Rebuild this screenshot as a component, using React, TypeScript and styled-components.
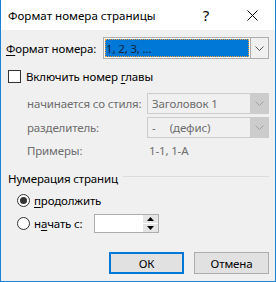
import React from 'react';
import styled, { createGlobalStyle } from 'styled-components';

const GlobalStyle = createGlobalStyle`
    html, body {
        margin: 0;
        padding: 0;
        background: #ffffff;
    }
    body {
        font-family: 'Noto Sans', 'Liberation Sans', sans-serif;
        font-size: 11.5px;
        letter-spacing: -0.15px;
        color: #000;
    }
`;

const Window = styled.div`
    width: 276px;
    height: 282px;
    box-sizing: border-box;
    border: 1px solid #1883d7;
    border-top: none;
    display: flex;
    flex-direction: column;
    background: #f0f0f0;
`;

const TitleBar = styled.div`
    height: 30px;
    background: #fff;
    display: flex;
    align-items: center;
    padding-left: 7px;
    font-size: 11.6px;
    letter-spacing: 0;
`;

const TitleText = styled.div`
    flex: 1;
`;

const TitleButton = styled.div`
    width: 46px;
    height: 30px;
    display: flex;
    align-items: center;
    justify-content: center;
    font-size: 15px;
`;

const Body = styled.div`
    flex: 1;
    display: flex;
    flex-direction: column;
    padding: 7px 6px 0 5px;
`;

const FormRow = styled.div<{ $indent?: number; $top?: number; $height?: number }>`
    display: flex;
    align-items: center;
    height: ${(p) => p.$height ?? 21}px;
    margin-top: ${(p) => p.$top ?? 0}px;
    padding-left: ${(p) => p.$indent ?? 0}px;
`;

const Label = styled.div<{ $width: number; $disabled?: boolean }>`
    width: ${(p) => p.$width}px;
    flex-shrink: 0;
    color: ${(p) => (p.$disabled ? '#6d6d6d' : '#000')};
    white-space: nowrap;
`;

const Key = styled.span`
    text-decoration: underline;
    text-underline-offset: 2px;
`;

const Select = styled.div<{ $disabled?: boolean; $width: number }>`
    width: ${(p) => p.$width}px;
    height: 100%;
    box-sizing: border-box;
    border: 1px solid ${(p) => (p.$disabled ? '#cccccc' : '#adadad')};
    background: ${(p) => (p.$disabled ? '#f0f0f0' : '#fff')};
    display: flex;
    align-items: stretch;
    color: ${(p) => (p.$disabled ? '#6d6d6d' : '#000')};
`;

const SelectValue = styled.div<{ $selected?: boolean }>`
    flex: 1;
    display: flex;
    align-items: center;
    white-space: pre;
    padding-left: ${(p) => (p.$selected ? 1 : 4)}px;
    margin: ${(p) => (p.$selected ? '1px' : '0')};
    background: ${(p) => (p.$selected ? '#0078d7' : 'transparent')};
    outline: ${(p) => (p.$selected ? '1px dotted #f09a3a' : 'none')};
    outline-offset: -1px;
    color: ${(p) => (p.$selected ? '#0c2440' : 'inherit')};
`;

const SelectArrow = styled.div<{ $disabled?: boolean }>`
    width: 17px;
    display: flex;
    align-items: center;
    justify-content: center;
    background: ${(p) => (p.$disabled ? '#cccccc' : '#f0f0f0')};
    border-left: 1px solid ${(p) => (p.$disabled ? '#cccccc' : '#adadad')};
`;

const CheckBox = styled.div`
    width: 13px;
    height: 13px;
    box-sizing: border-box;
    border: 1px solid #333;
    background: #fff;
    margin: 0 5px 0 2px;
`;

const Radio = styled.div<{ $checked?: boolean }>`
    width: 13px;
    height: 13px;
    box-sizing: border-box;
    border: 1px solid #333;
    border-radius: 50%;
    background: #fff;
    margin: 0 4px 0 11px;
    display: flex;
    align-items: center;
    justify-content: center;
    &::after {
        content: '';
        display: ${(p) => (p.$checked ? 'block' : 'none')};
        width: 7px;
        height: 7px;
        border-radius: 50%;
        background: #333;
    }
`;

const GroupHeader = styled.div`
    display: flex;
    align-items: center;
    height: 18px;
    margin-top: 10px;
    padding-left: 2px;
    gap: 5px;
    &::after {
        content: '';
        flex: 1;
        height: 1px;
        background: #dcdcdc;
        margin-top: -3px;
    }
`;

const SpinBox = styled.div`
    width: 65px;
    height: 19px;
    box-sizing: border-box;
    border: 1px solid #adadad;
    background: #fff;
    display: flex;
    justify-content: flex-end;
`;

const SpinButtons = styled.div`
    width: 15px;
    display: flex;
    flex-direction: column;
    gap: 1px;
    background: #fff;
`;

const SpinButton = styled.div`
    flex: 1;
    background: #e5e5e5;
    display: flex;
    align-items: center;
    justify-content: center;
`;

const ButtonRow = styled.div`
    margin-top: auto;
    margin-bottom: 7px;
    display: flex;
    justify-content: flex-end;
    gap: 10px;
`;

const Button = styled.div<{ $primary?: boolean }>`
    width: 75px;
    height: 22px;
    box-sizing: border-box;
    border: ${(p) => (p.$primary ? '2px solid #0078d7' : '1px solid #adadad')};
    background: #e1e1e1;
    display: flex;
    align-items: center;
    justify-content: center;
`;

const Chevron = ({ color }: { color: string }) => (
    <svg width="9" height="5" viewBox="0 0 9 5">
        <path d="M0.5 0.5 L4.5 4.5 L8.5 0.5" fill="none" stroke={color} strokeWidth="1" />
    </svg>
);

const Triangle = ({ up }: { up?: boolean }) => (
    <svg width="7" height="4" viewBox="0 0 7 4">
        <path d={up ? 'M0 4 L3.5 0 L7 4 Z' : 'M0 0 L3.5 4 L7 0 Z'} fill="#000" />
    </svg>
);

const App = () => (
    <>
        <GlobalStyle />
        <Window>
            <TitleBar>
                <TitleText>Формат номера страницы</TitleText>
                <TitleButton>?</TitleButton>
                <TitleButton>
                    <svg width="11" height="11" viewBox="0 0 11 11">
                        <path d="M0.5 0.5 L10.5 10.5 M10.5 0.5 L0.5 10.5" stroke="#000" strokeWidth="1" />
                    </svg>
                </TitleButton>
            </TitleBar>
            <Body>
                <FormRow $height={22}>
                    <Label $width={97}>
                        <Key>Ф</Key>ормат номера:
                    </Label>
                    <Select $width={167}>
                        <SelectValue $selected>1, 2, 3, ...</SelectValue>
                        <SelectArrow>
                            <Chevron color="#555" />
                        </SelectArrow>
                    </Select>
                </FormRow>
                <FormRow $top={9} $height={16}>
                    <CheckBox />
                    <Label $width={200}>
                        Включить номер <Key>г</Key>лавы
                    </Label>
                </FormRow>
                <FormRow $top={9} $indent={21}>
                    <Label $width={120} $disabled>
                        начинается со стиля:
                    </Label>
                    <Select $width={123} $disabled>
                        <SelectValue>Заголовок 1</SelectValue>
                        <SelectArrow $disabled>
                            <Chevron color="#a0a0a0" />
                        </SelectArrow>
                    </Select>
                </FormRow>
                <FormRow $top={3} $indent={21}>
                    <Label $width={120} $disabled>
                        разделитель:
                    </Label>
                    <Select $width={123} $disabled>
                        <SelectValue>{'-     (дефис)'}</SelectValue>
                        <SelectArrow $disabled>
                            <Chevron color="#a0a0a0" />
                        </SelectArrow>
                    </Select>
                </FormRow>
                <FormRow $top={3} $indent={21} $height={18}>
                    <Label $width={122} $disabled>
                        Примеры:
                    </Label>
                    <Label $width={80} $disabled>
                        1-1, 1-А
                    </Label>
                </FormRow>
                <GroupHeader>Нумерация страниц</GroupHeader>
                <FormRow $top={4} $height={19}>
                    <Radio $checked />
                    <Label $width={120}>
                        <Key>п</Key>родолжить
                    </Label>
                </FormRow>
                <FormRow $top={4} $height={19}>
                    <Radio />
                    <Label $width={60}>
                        н<Key>а</Key>чать с:
                    </Label>
                    <SpinBox>
                        <SpinButtons>
                            <SpinButton>
                                <Triangle up />
                            </SpinButton>
                            <SpinButton>
                                <Triangle />
                            </SpinButton>
                        </SpinButtons>
                    </SpinBox>
                </FormRow>
                <ButtonRow>
                    <Button $primary>ОК</Button>
                    <Button>Отмена</Button>
                </ButtonRow>
            </Body>
        </Window>
    </>
);

export default App;
